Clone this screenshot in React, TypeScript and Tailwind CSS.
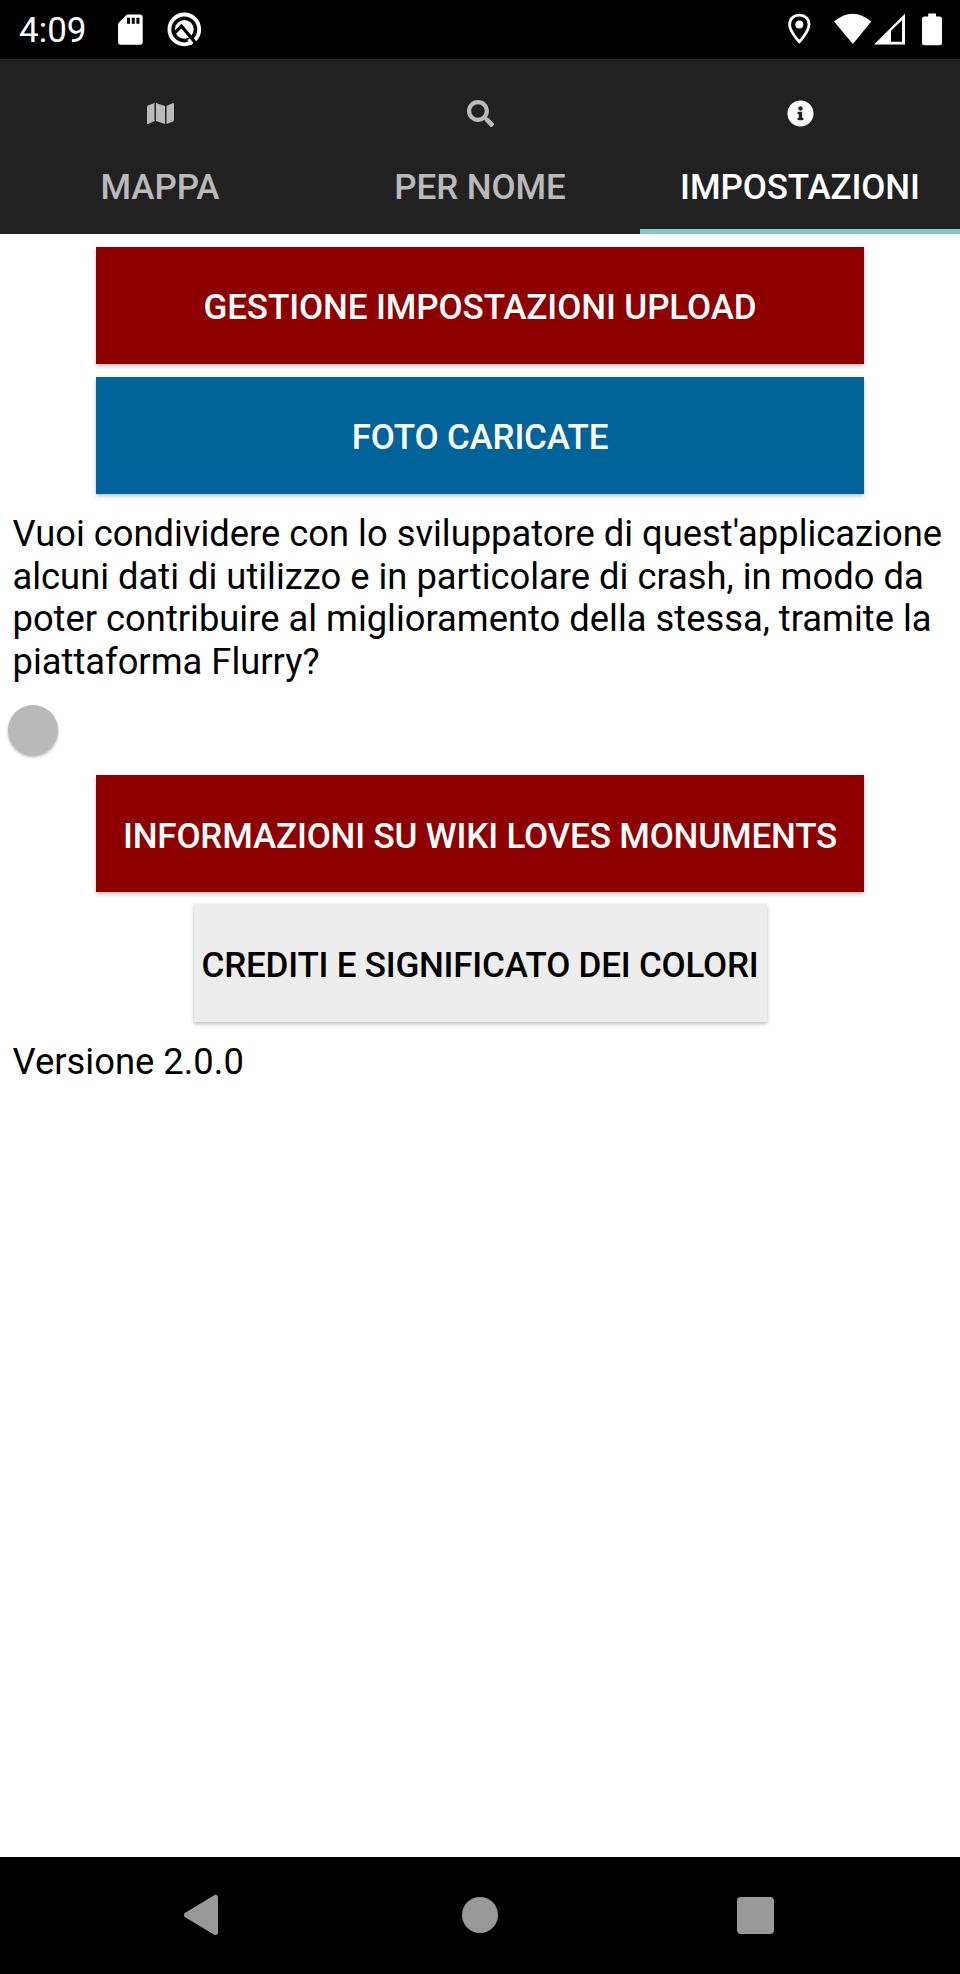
import { FaMap, FaSearch, FaInfoCircle } from "react-icons/fa";

function StatusBar() {
  return (
    <div className="flex h-[58.5px] shrink-0 items-start bg-black text-white">
      <span className="ml-[19px] w-[70px] whitespace-nowrap pt-[10px] text-[35px] leading-[41px]">4:09</span>
      <svg className="ml-[29px] mt-[14px]" width="25" height="31" viewBox="0 0 25 31" fill="none">
        <path d="M9 0.5H22Q24.7 0.5 24.7 3.2V28Q24.7 30.8 22 30.8H2.8Q0 30.8 0 28V9.5Z" fill="white" />
        <path d="M9 3.8h3v5.9h-3zM13.8 3.8h3v5.9h-3zM18.4 3.8h3v5.9h-3z" fill="black" />
      </svg>
      <svg className="ml-[24px] mt-[12px]" width="35" height="35" viewBox="0 0 35 35" fill="none">
        <circle cx="17.3" cy="17.4" r="14.9" stroke="white" strokeWidth="3.8" />
        <circle cx="17.3" cy="17.4" r="9.4" fill="white" />
        <path d="M7 21.5L14.5 14.2L29 31.5" stroke="black" strokeWidth="3.2" />
        <path d="M22 26.5L27.5 33" stroke="black" strokeWidth="3" />
        <path d="M21.5 27.3L25.3 32" stroke="white" strokeWidth="3" />
      </svg>
      <div className="flex-1" />
      <svg className="mt-[13px]" width="24" height="32" viewBox="0 0 24 32">
        <path d="M12.3 2.2C6.6 2.2 2.6 6.2 2.6 11.4C2.6 18.3 12.3 28.8 12.3 28.8S22 18.3 22 11.4C22 6.2 18 2.2 12.3 2.2Z" fill="none" stroke="white" strokeWidth="2.8" />
        <circle cx="12.3" cy="11.5" r="4" fill="white" />
      </svg>
      <svg className="ml-[23px] mt-[13px]" width="38" height="32" viewBox="0 0 38 32">
        <path d="M0 8.5Q18.5 -7 37.3 8.5L18.9 31Z" fill="white" />
      </svg>
      <svg className="ml-[2px] mt-[13px]" width="31" height="32" viewBox="0 0 31 32">
        <path fillRule="evenodd" d="M0 31.5L31 0.8V31.5ZM17 17.8V28.7H28V7.3Z" fill="white" />
      </svg>
      <svg className="ml-[17px] mr-[18.5px] mt-[13px]" width="20" height="33" viewBox="0 0 20 33">
        <path d="M6.2 0.5H14V3.5H17.5Q20 3.5 20 6V29.8Q20 32.3 17.5 32.3H2.5Q0 32.3 0 29.8V6Q0 3.5 2.5 3.5H6.2Z" fill="white" />
      </svg>
    </div>
  );
}

function Tabs() {
  const tabs = [
    { label: "MAPPA", Icon: FaMap, active: false },
    { label: "PER NOME", Icon: FaSearch, active: false },
    { label: "IMPOSTAZIONI", Icon: FaInfoCircle, active: true },
  ];
  return (
    <div className="grid h-[175.5px] shrink-0 grid-cols-3 bg-[#212121] font-medium">
      {tabs.map(({ label, Icon, active }) => (
        <button
          key={label}
          className={`flex flex-col items-center border-b-[5px] pt-[41.5px] ${active ? "border-[#80cbc4] text-white" : "border-transparent text-[#bababa]"}`}
        >
          <Icon size={27} />
          <span className="mt-[40px] whitespace-nowrap text-[35px] leading-[41px] tracking-[-0.1px]">{label}</span>
        </button>
      ))}
    </div>
  );
}

const shadow = "shadow-[0_2px_4px_rgba(0,0,0,0.26)]";

export default function App() {
  return (
    <div className="flex h-[1974px] w-[960px] flex-col bg-white font-['Roboto',sans-serif] text-black">
      <StatusBar />
      <Tabs />
      <main className="flex flex-1 flex-col items-center pt-[13px] font-medium">
        <button className={`h-[117px] w-[768px] bg-[#8e0000] pt-[6px] text-[35px] tracking-[-0.1px] text-white ${shadow}`}>
          GESTIONE IMPOSTAZIONI UPLOAD
        </button>
        <button className={`mt-[13px] h-[117px] w-[768px] bg-[#006399] pt-[6px] text-[35px] tracking-[-0.2px] text-white ${shadow}`}>
          FOTO CARICATE
        </button>
        <p className="mt-[19px] w-full whitespace-nowrap pl-[12.5px] text-[36.33px] font-normal leading-[42.7px]">
          Vuoi condividere con lo sviluppatore di quest'applicazione
          <br />
          alcuni dati di utilizzo e in particolare di crash, in modo da
          <br />
          poter contribuire al miglioramento della stessa, tramite la
          <br />
          piattaforma Flurry?
        </p>
        <div className="mt-[21px] w-full pl-[8px]">
          <div className="size-[50px] rounded-full bg-[#b9b9b9] shadow-[0_2px_3px_rgba(0,0,0,0.3)]" />
        </div>
        <button className={`mt-[20.5px] h-[117px] w-[768px] bg-[#8e0000] pt-[6px] text-[35px] tracking-[-0.17px] text-white ${shadow}`}>
          INFORMAZIONI SU WIKI LOVES MONUMENTS
        </button>
        <button className={`mt-[12px] h-[118px] w-[573px] whitespace-nowrap bg-[#ededed] pt-[6px] text-[35px] tracking-[-0.22px] ${shadow}`}>
          CREDITI E SIGNIFICATO DEI COLORI
        </button>
        <p className="mt-[18.7px] w-full pl-[12.5px] text-[36.4px] font-normal leading-[42.7px]">Versione 2.0.0</p>
      </main>
      <nav className="flex h-[117.5px] shrink-0 items-center bg-black text-[#999]">
        <svg className="ml-[183px]" width="36" height="42" viewBox="0 0 36 42">
          <path d="M3.5 21L32.5 3.5V38.5Z" fill="currentColor" stroke="currentColor" strokeWidth="5" strokeLinejoin="round" />
        </svg>
        <div className="ml-[243px] size-[36px] rounded-full bg-[#999]" />
        <div className="ml-[239px] size-[37px] rounded-[4px] bg-[#999]" />
      </nav>
    </div>
  );
}
